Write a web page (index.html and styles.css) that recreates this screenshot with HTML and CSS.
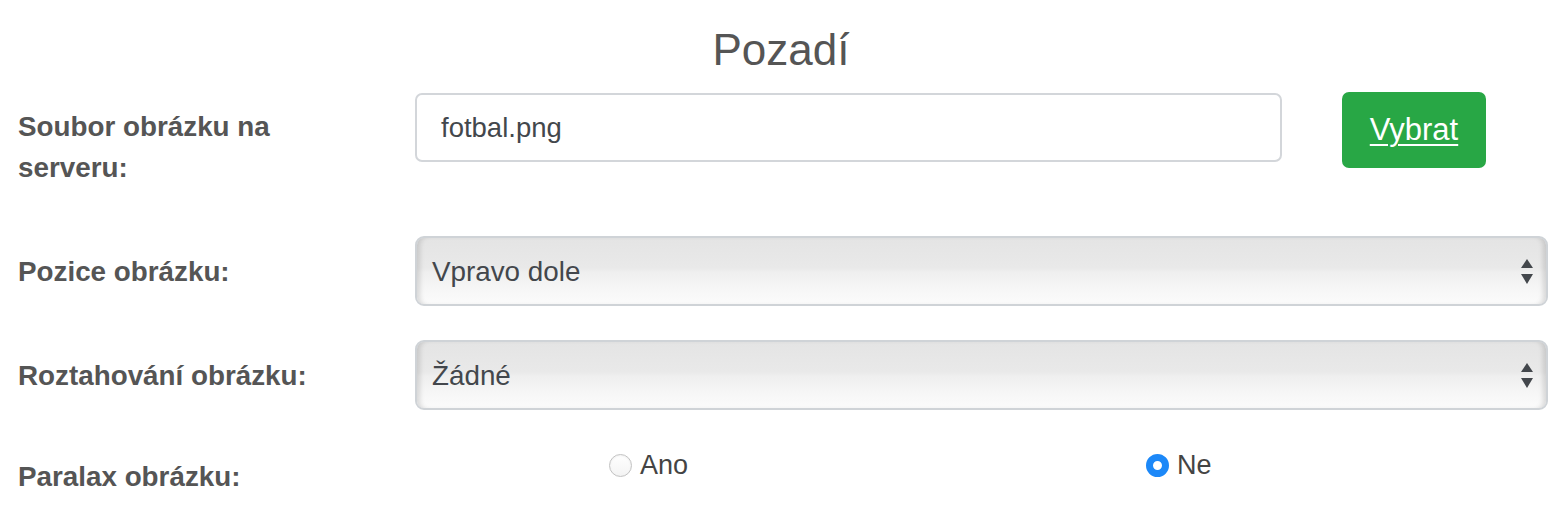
FILE: index.html
```html
<!DOCTYPE html>
<html lang="cs">
<head>
<meta charset="utf-8">
<title>Pozadí</title>
<link rel="stylesheet" href="styles.css">
</head>
<body>
<div class="page">
  <h2 class="title">Pozadí</h2>

  <div class="row row-file">
    <label class="label label-file">Soubor obrázku na serveru:</label>
    <div class="field file-field">
      <div class="text-input">fotbal.png</div>
      <a class="btn-green" href="#">Vybrat</a>
    </div>
  </div>

  <div class="row row-select row-pos">
    <label class="label">Pozice obrázku:</label>
    <div class="field">
      <div class="select">
        <span class="select-value">Vpravo dole</span>
        <svg class="select-arrows" width="12" height="26" viewBox="0 0 12 26"><path d="M6 0 L12 9 L0 9 Z" fill="#43474c"/><path d="M0 15 L12 15 L6 25 Z" fill="#43474c"/></svg>
      </div>
    </div>
  </div>

  <div class="row row-select row-stretch">
    <label class="label">Roztahování obrázku:</label>
    <div class="field">
      <div class="select">
        <span class="select-value">Žádné</span>
        <svg class="select-arrows" width="12" height="26" viewBox="0 0 12 26"><path d="M6 0 L12 9 L0 9 Z" fill="#43474c"/><path d="M0 15 L12 15 L6 25 Z" fill="#43474c"/></svg>
      </div>
    </div>
  </div>

  <div class="row row-radio">
    <label class="label label-radio">Paralax obrázku:</label>
    <div class="field radios">
      <div class="radio-item"><span class="radio"></span><span class="radio-text">Ano</span></div>
      <div class="radio-item"><span class="radio checked"></span><span class="radio-text">Ne</span></div>
    </div>
  </div>
</div>
</body>
</html>
```

FILE: styles.css
```css
html, body {
  margin: 0;
  padding: 0;
  background: #ffffff;
}

body {
  font-family: "Liberation Sans", Arial, Helvetica, sans-serif;
  color: #555555;
}

.page {
  width: 1568px;
}

.title {
  margin: 25px 0 0 0;
  height: 50px;
  line-height: 50px;
  font-size: 44px;
  font-weight: normal;
  text-align: center;
  color: #555555;
  padding-right: 6px;
}

.row {
  display: flex;
}

.label {
  flex: 0 0 auto;
  box-sizing: border-box;
  width: 415px;
  padding-left: 18px;
  padding-right: 60px;
  font-size: 27.8px;
  font-weight: bold;
  line-height: 41px;
  color: #555555;
}

.field {
  flex: 0 0 auto;
  width: 1133px;
}

/* row 1 */
.row-file {
  margin-top: 17px;
  align-items: flex-start;
}

.label-file {
  padding-top: 14px;
}

.file-field {
  display: flex;
  align-items: flex-start;
  gap: 60px;
}

.text-input {
  box-sizing: border-box;
  width: 867px;
  height: 69px;
  margin-top: 1px;
  border: 2px solid #d3d6da;
  border-radius: 7px;
  padding-left: 24px;
  font-size: 27.5px;
  line-height: 65px;
  color: #43474c;
}

.btn-green {
  box-sizing: border-box;
  width: 144px;
  height: 76px;
  border-radius: 7px;
  background: #28a745;
  color: #ffffff;
  font-size: 31px;
  line-height: 76px;
  text-align: center;
  text-decoration: underline;
  text-decoration-thickness: 2px;
  text-underline-offset: 4px;
}

/* select rows */
.row-select {
  align-items: center;
}

.row-pos {
  margin-top: 48px;
}

.row-stretch {
  margin-top: 34px;
}

.select {
  box-sizing: border-box;
  height: 70px;
  border: 2px solid #cfd3d7;
  border-radius: 9px;
  background: linear-gradient(to bottom, #e4e4e4 0%, #e9e9e9 45%, #efefef 52%, #f7f7f7 80%, #fbfbfb 100%);
  box-shadow: inset 6px 0 5px -3px rgba(0, 0, 0, 0.13), inset -6px 0 5px -3px rgba(0, 0, 0, 0.13);
  display: flex;
  align-items: center;
  justify-content: space-between;
  padding: 2px 13px 0 15px;
}

.select-value {
  font-size: 27.8px;
  color: #43474c;
}

.select-arrows {
  display: block;
  margin-top: -1px;
}

/* radio row */
.row-radio {
  margin-top: 35px;
  align-items: flex-start;
}

.label-radio {
  padding-top: 11px;
}

.radios {
  display: grid;
  grid-template-columns: 537px auto;
  padding-left: 194px;
  box-sizing: border-box;
}

.radio-item {
  display: flex;
  align-items: center;
  gap: 8px;
  height: 41px;
}

.radio {
  box-sizing: border-box;
  width: 23px;
  height: 23px;
  border-radius: 50%;
  border: 1px solid #c2c2c2;
  background: linear-gradient(to bottom, #ffffff, #f3f3f3);
  box-shadow: inset 0 1px 2px rgba(0, 0, 0, 0.06);
}

.radio.checked {
  border: 7.5px solid #1c88f8;
  background: #ffffff;
  box-shadow: none;
}

.radio-text {
  font-size: 27px;
  color: #444444;
}
```
